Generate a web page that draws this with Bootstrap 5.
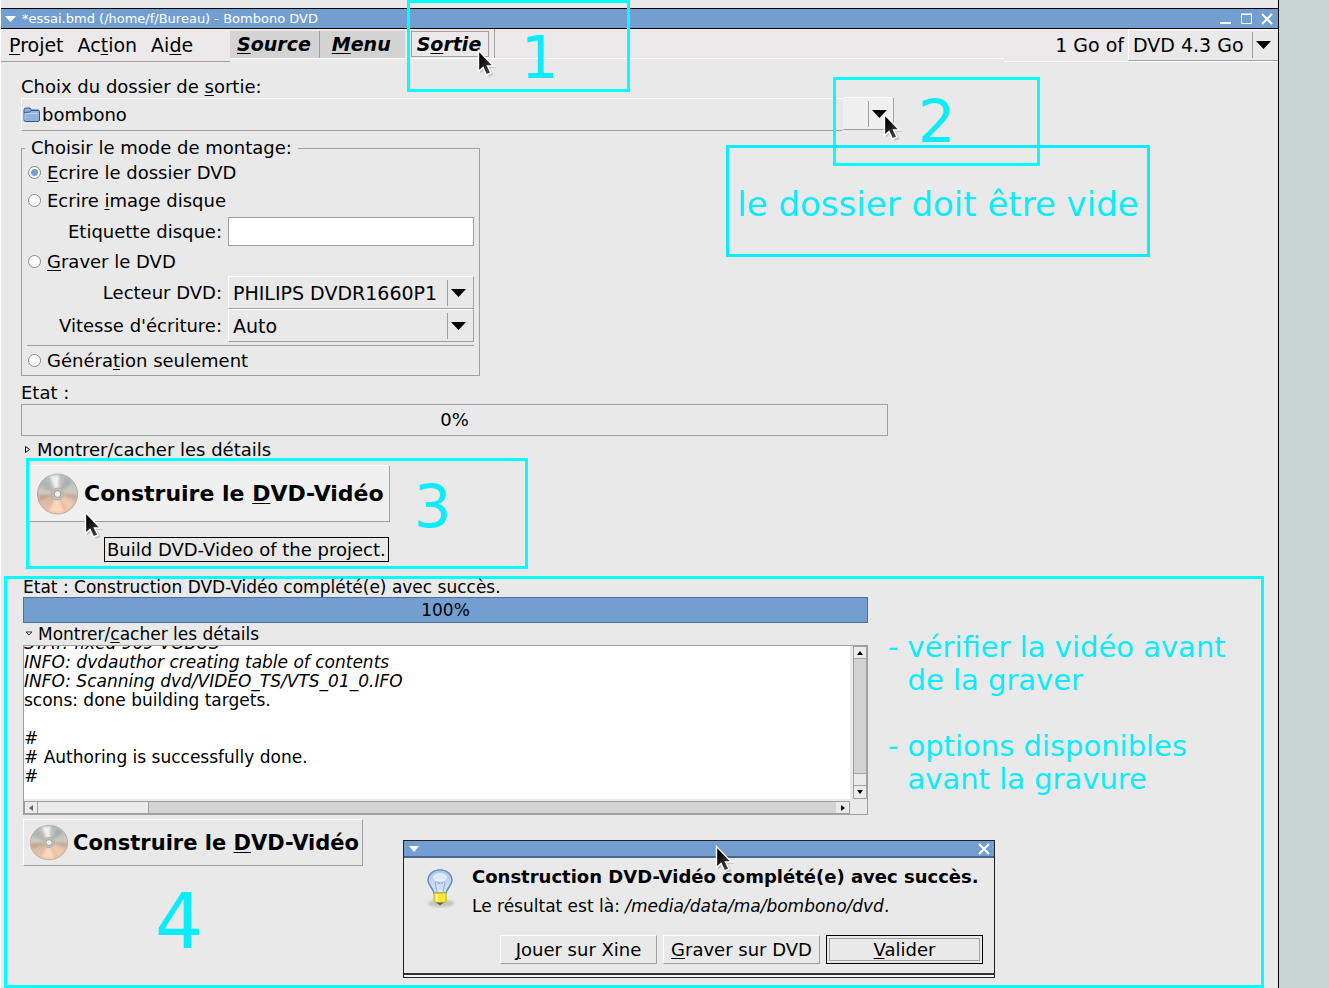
<!DOCTYPE html>
<html lang="fr">
<head>
<meta charset="utf-8">
<meta name="viewport" content="width=device-width, initial-scale=1">
<title>*essai.bmd (/home/f/Bureau) - Bombono DVD</title>
<link rel="stylesheet" href="https://cdn.jsdelivr.net/npm/bootstrap@5.3.0/dist/css/bootstrap.min.css">
<style>
:root { --face:#e9e9e9; --edge:#a0a0a0; --blue:#729fcf; --cyan:#00ffff; --ink:#0cecfa; }
body { font-family:"DejaVu Sans",sans-serif; font-size:18px; line-height:22px; color:#000; background:#c9d5d4; }
u { text-underline-offset:2px; text-decoration-thickness:1px; }
.desk { padding-right:50px; }
.win { background:var(--face); border-right:1px solid #000; border-left:1px solid #fff; }
.behind { height:8px; }
.titlebar { height:21px; background:var(--blue); color:#fff; font-size:13px; border-top:1px solid #000; border-bottom:1px solid #000; padding:0 4px; gap:5px; }
.titlebar button, .plain { border:0; background:none; padding:0; line-height:0; }
.menubar { height:33px; font-size:19px; background:#ebe9ea; }
.menus { width:229px; padding-left:8px; gap:14px; border-bottom:1px solid var(--edge); }
.menus a, .tabs a { color:#000; text-decoration:none; }
.tabs { height:30px; font:italic bold 19px/26px "DejaVu Sans",sans-serif; border-bottom:1px solid #fff; padding-top:2px; }
.tabs a { padding:0 8px 0 7px; line-height:27px; background:#d3d3d3; }
.tabs a + a { border-left:1px solid var(--edge); padding:0 14px 0 12px; }
.tabs a.current { background:none; border:1px solid var(--edge); line-height:24px; height:26px; padding:0 7px 0 5px; margin-left:6px; }
.tabend { border-left:1px solid var(--edge); margin:-2px 0 0 5px; }
.capacity { width:274px; border-bottom:1px solid #fff; }
.pick { appearance:none; border:1px solid; border-color:#fff var(--edge) var(--edge) #fff; border-radius:0; height:33px; padding:0 4px; color:#000; font-size:19px;
  background:var(--face) url("data:image/svg+xml,%3Csvg xmlns='http://www.w3.org/2000/svg' width='26' height='26'%3E%3Cpath d='M.5 0v26' stroke='%23a0a0a0'/%3E%3Cpath d='M4 9h15l-7.500 8z'/%3E%3C/svg%3E") no-repeat right 0 center; }
.capacity .pick { width:150px; height:32px; border-right:0; }
.work { padding:14px 0 0 20px; }
.wide { max-width:867px; }
.folder { max-width:873px; height:33px; }
.folder .name { border:1px solid; border-color:#fff transparent var(--edge) #fff; padding:0 1px; gap:2px; }
.folder .drop { width:51px; margin:-1px 0 1px; background:#f0f0f0; border:1px solid; border-color:#fff var(--edge) var(--edge) #f0f0f0; }
.modes { width:459px; height:238px; margin-top:7px; border:1px solid var(--edge); padding:0 5px; }
.modes legend { float:none; width:auto; font-size:18px; line-height:20px; margin:0 0 3px -2px; padding:0 6px; }
.modes hr { margin:3px 0; border-color:var(--edge); opacity:1; }
.opt { height:24px; gap:6px; padding-left:1px; }
.opt input { appearance:none; width:13px; height:13px; margin:0 0 1px; border:1px solid #888; border-radius:50%; background:#fff; }
.opt input:checked { background:radial-gradient(circle,var(--blue) 0 3px,#fff 4px); }
.opt.burn { margin:4px 0 2px; }
.pair label { width:195px; text-align:right; }
.pair { gap:6px; }
.pair .pick, .pair input { width:246px; }
.pair input { height:29px; border:1px solid var(--edge); border-radius:0; background:#fff; padding:0 4px; }
.state { padding-top:6px; }
.meter { height:32px; border:1px solid var(--edge); border-radius:0; background:none; font-size:18px; color:#000; }
.fold { line-height:20px; }
.call { border:3px solid var(--cyan); }
.num { color:var(--ink); font-size:59px; line-height:59px; }
.step3 { width:502px; height:111px; margin-left:5px; margin-top:-2px; }
.build { border:1px solid; border-color:#fff var(--edge) var(--edge) #fff; font-weight:bold; font-size:22px; line-height:26px; color:#000; padding:0 3px 0 6px; gap:5px; background:#f0f0f0; }
.step3 .build { width:361px; height:57px; margin-top:4px; }
.tip { border:1px solid #000; left:75px; top:76px; padding:0 2px; line-height:23px; white-space:nowrap; }
.step4 { margin:7px 14px 0 3px; padding-left:16px; height:412px; font-size:17px; line-height:17px; }
.step4 .left { width:845px; }
.step4 .fold { line-height:22px; }
.done { height:26px; border:1px solid #50719a; border-radius:0; background:var(--blue); margin-top:1px; }
.done .progress-bar { background:var(--blue); color:#000; font-size:17px; }
.log { display:grid; grid-template-columns:minmax(0,1fr) 14px; grid-template-rows:153px 13px; gap:2px 3px; border:1px solid var(--edge); background:var(--face); }
.log pre { font:17px/19px "DejaVu Sans",sans-serif; background:#fff; margin:0; overflow:hidden; }
.log pre code { font:inherit; color:inherit; display:block; margin-top:-12px; }
.sb { background:#d3d3d3; border:1px solid var(--edge); }
.sb i { background:#ebebeb; display:flex; align-items:center; justify-content:center; }
.sbv i { height:12px; border-bottom:1px solid var(--edge); }
.sbv i.thumb { height:13px; border-top:1px solid var(--edge); }
.sbh i { width:13px; border-right:1px solid var(--edge); }
.sbh i.thumb { width:111px; }
.step4 .build { width:340px; height:47px; margin-top:4px; font-size:21px; background:var(--face); gap:4px; padding-left:5px; }
.notes { color:var(--ink); font-size:29px; line-height:33px; list-style:none; padding:0; margin:52px 0 0 20px; }
.notes li { display:flex; gap:9px; margin-bottom:33px; }
.four { font-size:76px; line-height:76px; margin:18px 0 0 132px; }
.dlg { left:396px; top:261px; width:592px; height:138px; border:1px solid #222; background:var(--face); }
.dlg .titlebar { height:17px; border-top:0; border-bottom:2px solid #48658a; }
.dlg .base { height:4px; border-top:2px solid #333; background:#f4f4f4; }
.dlg h2 { font-size:18px; font-weight:bold; line-height:22px; margin:0 0 10px; }
.acts { gap:6px; padding:0 11px 9px 0; }
.dlg .gbtn { width:157px; height:29px; font-size:18px; background:var(--face); border:1px solid; border-color:#fff var(--edge) var(--edge) #fff; padding:0; }
.dlg .gbtn.def { border:1px solid #000; outline:1px solid var(--edge); outline-offset:-4px; }
.bulb { margin:2px 15px 0 19px; }
.over { pointer-events:none; }
.c1 { left:407px; top:0; width:223px; height:92px; padding:25px 0 0 111px; }
.c2 { left:833px; top:77px; width:207px; height:89px; padding:12px 0 0 82px; }
.c3 { left:726px; top:145px; width:424px; height:112px; padding-top:5px; border-color:var(--ink); color:var(--ink); font-size:34px; white-space:nowrap; }
.cur { width:20px; height:30px; }
</style>
</head>
<body>
<svg width="0" height="0" class="position-absolute" aria-hidden="true">
  <defs>
    <linearGradient id="gd" x1="0" y1="0" x2="0" y2="1"><stop offset="0" stop-color="#b4babf"/><stop offset=".45" stop-color="#cdcac3"/><stop offset=".62" stop-color="#d5b9a5"/><stop offset="1" stop-color="#f6c4a0"/></linearGradient>
    <linearGradient id="gb" x1="0" y1="0" x2="0" y2="1"><stop offset="0" stop-color="#a9c6ea"/><stop offset="1" stop-color="#dce8f6"/></linearGradient>
    <linearGradient id="gk" x1="0" y1="0" x2="1" y2="1"><stop offset=".2" stop-color="#000"/><stop offset="1" stop-color="#555"/></linearGradient>
    <filter id="soft"><feGaussianBlur stdDeviation="1.200"/></filter>
  </defs>
  <symbol id="disc" viewBox="0 0 44 44">
    <circle cx="22" cy="22" r="20.500" fill="url(#gd)" stroke="#b3aaa2"/>
    <g filter="url(#soft)">
    <path d="M22 22L14 4Q18 2.500 24 3z" fill="#f4f6f7" opacity=".9"/><path d="M22 22L31 5Q35 8 37 11z" fill="#8e979f" opacity=".45"/>
    <path d="M22 22L4 15Q6 9 10 7z" fill="#8e979f" opacity=".35"/><path d="M22 22L3 23V29z" fill="#b08468" opacity=".4"/><path d="M22 22L41 22V27z" fill="#b08468" opacity=".35"/>
    <path d="M22 22L14 39Q21 42 28 40z" fill="#ffe2c9" opacity=".7"/><path d="M22 22L39 30Q36 36 32 38z" fill="#fbd3b4" opacity=".6"/>
    </g>
    <circle cx="22" cy="22" r="6" fill="#c9c4bd" stroke="#aea9a2"/><circle cx="22" cy="22" r="3.500" fill="#f0efee" stroke="#96918b"/>
  </symbol>
  <symbol id="cursor" viewBox="0 0 20 30">
    <path d="M3 3v21.500l5-4 3.500 7.500 5-2-3.500-7h6z" fill="#888" opacity=".35"/>
    <path d="M1.500 1.500v21l4.500-4 3.500 7.500 4.500-2-3.500-7h6z" fill="url(#gk)" stroke="#fff" stroke-width="1.400"/>
  </symbol>
</svg>
<div class="desk position-relative min-vh-100">
  <div class="win min-vh-100">
    <div class="behind"></div>
    <header class="titlebar d-flex align-items-center">
      <svg width="12" height="6"><path d="M0 0h11l-5.500 6z" fill="#fff"/></svg>
      <span>*essai.bmd (/home/f/Bureau) - Bombono DVD</span>
      <span class="ms-auto d-flex gap-2">
        <button aria-label="Réduire"><svg width="13" height="13"><path d="M1 11h11" stroke="#fff" stroke-width="2"/></svg></button>
        <button aria-label="Agrandir"><svg width="13" height="13"><path d="M1.500 2.500h10v9h-10zM1 2h11" fill="none" stroke="#fff"/></svg></button>
        <button aria-label="Fermer"><svg width="13" height="13"><path d="M1 2l10 10M11 2L1 12" stroke="#fff" stroke-width="2"/></svg></button>
      </span>
    </header>
    <div class="menubar d-flex">
      <nav class="menus d-flex align-items-center"><a href="#"><u>P</u>rojet</a><a href="#">Ac<u>t</u>ion</a><a href="#">Ai<u>d</u>e</a></nav>
      <nav class="tabs d-flex flex-grow-1"><a href="#"><u>S</u>ource</a><a href="#"><u>M</u>enu</a><a href="#" class="current">S<u>o</u>rtie</a><span class="tabend"></span></nav>
      <div class="capacity d-flex align-items-center justify-content-end"><label for="cap" class="pe-1">1 Go of</label>
        <select id="cap" class="pick"><option>DVD 4.3 Go</option></select></div>
    </div>
    <main class="work">
      <label for="dir">Choix du dossier de <u>s</u>ortie:</label>
      <div class="folder d-flex">
        <button id="dir" class="plain name flex-grow-1 d-flex align-items-center text-black lh-base">
          <svg width="17" height="15"><path d="M1 13V3q0-2 2-2h4l1 2h7q1.500 0 1.500 1.500V13q0 1.500-1.500 1.500H2.500Q1 14.500 1 13z" fill="#8fb3de" stroke="#2f5b95"/><path d="M1.500 5.500l5-.5 2-1.500H16" fill="none" stroke="#2f5b95"/><path d="M2 13V6.500h13" fill="none" stroke="#bdd3ee"/></svg>bombono</button>
        <button class="plain drop d-flex align-items-center" aria-label="Parcourir"><svg width="50" height="26"><path d="M24.500 0v26" stroke="#a0a0a0"/><path d="M28 9h15l-7.500 8z"/></svg></button>
      </div>
      <fieldset class="modes">
        <legend>Choisir le mode de montage:</legend>
        <div class="opt d-flex align-items-center mb-1"><input type="radio" name="m" id="m1" checked><label for="m1"><u>E</u>crire le dossier DVD</label></div>
        <div class="opt d-flex align-items-center mb-1"><input type="radio" name="m" id="m2"><label for="m2">Ecrire <u>i</u>mage disque</label></div>
        <div class="pair d-flex align-items-center"><label for="tag">Etiquette disque:</label><input id="tag" type="text"></div>
        <div class="opt burn d-flex align-items-center"><input type="radio" name="m" id="m3"><label for="m3"><u>G</u>raver le DVD</label></div>
        <div class="pair d-flex align-items-center"><label for="drv">Lecteur DVD:</label><select id="drv" class="pick"><option>PHILIPS DVDR1660P1</option></select></div>
        <div class="pair d-flex align-items-center"><label for="spd">Vitesse d'écriture:</label><select id="spd" class="pick"><option>Auto</option></select></div>
        <hr>
        <div class="opt d-flex align-items-center"><input type="radio" name="m" id="m4"><label for="m4">Généra<u>t</u>ion seulement</label></div>
      </fieldset>
      <div class="state">Etat :</div>
      <div class="wide"><div class="meter progress justify-content-center align-items-center" role="progressbar" aria-label="Etat" aria-valuenow="0">0%</div></div>
      <button class="plain fold d-flex align-items-center text-black mt-1"><svg width="12" height="10" class="me-1"><path d="M4.500 1.500v6l4-3z" fill="#fff" stroke="#000"/></svg><span>Montrer/<u>c</u>acher les détails</span></button>
      <section class="call step3 position-relative d-flex">
        <button class="build d-flex align-items-center text-nowrap"><svg width="43" height="44"><use href="#disc"/></svg><span>Construire le <u>D</u>VD-Vidéo</span></button>
        <span class="num ps-4 pt-3">3</span>
        <span class="tip position-absolute">Build DVD-Video of the project.</span>
        <svg class="cur position-absolute" style="left:55px;top:50px"><use href="#cursor"/></svg>
      </section>
    </main>
    <section class="call step4 position-relative">
      <div class="d-flex">
        <div class="left flex-shrink-0">
          <div>Etat : Construction DVD-Vidéo complété(e) avec succès.</div>
          <div class="done progress" role="progressbar" aria-label="Etat" aria-valuenow="100"><div class="progress-bar" style="width:100%">100%</div></div>
          <button class="plain fold d-flex align-items-center text-black"><svg width="11" height="8" class="me-1"><path d="M3 2h6l-3 3z" fill="#fff" stroke="#333"/></svg><span>Montrer/<u>c</u>acher les détails</span></button>
          <div class="log">
            <pre><code><em>STAT: fixed 969 VOBUS
INFO: dvdauthor creating table of contents
INFO: Scanning dvd/VIDEO_TS/VTS_01_0.IFO</em>
scons: done building targets.

#
# Authoring is successfully done.
#
</code></pre>
            <div class="sb sbv d-flex flex-column"><i><svg width="6" height="4"><path d="M0 4h6L3 0z"/></svg></i><i class="thumb mt-auto"></i><i class="border-bottom-0"><svg width="6" height="4"><path d="M0 0h6L3 4z"/></svg></i></div>
            <div class="sb sbh d-flex"><i><svg width="4" height="6"><path d="M4 0v6L0 3z" fill="#666"/></svg></i><i class="thumb"></i><i class="ms-auto border-end-0"><svg width="4" height="6"><path d="M0 0v6l4-3z"/></svg></i></div>
          </div>
          <button class="build d-flex align-items-center text-nowrap"><svg width="41" height="37" viewBox="0 0 44 44" preserveAspectRatio="none"><use href="#disc" width="44" height="44"/></svg><span>Construire le <u>D</u>VD-Vidéo</span></button>
          <div class="num four">4</div>
        </div>
        <ul class="notes text-nowrap">
          <li><span>-</span><span>vérifier la vidéo avant<br>de la graver</span></li>
          <li><span>-</span><span>options disponibles<br>avant la gravure</span></li>
        </ul>
      </div>
      <div class="dlg position-absolute d-flex flex-column" role="dialog" aria-labelledby="dt">
        <div class="titlebar d-flex align-items-center justify-content-between"><svg width="12" height="6"><path d="M1 0h10l-5 6z" fill="#fff"/></svg><button aria-label="Fermer"><svg width="12" height="12"><path d="M1 1l10 10M11 1L1 11" stroke="#fff" stroke-width="2"/></svg></button></div>
        <div class="d-flex flex-grow-1 pt-2">
          <svg width="34" height="40" viewBox="0 0 34 43" preserveAspectRatio="none" class="bulb flex-shrink-0"><ellipse cx="18" cy="38" rx="13" ry="4" fill="#aaa" opacity=".6" filter="url(#soft)"/><path d="M17 2C9 2 5 8 5 13c0 6 5 8 6 14h12c1-6 6-8 6-14C29 8 25 2 17 2z" fill="url(#gb)" stroke="#5f8cc4" stroke-width="1.500"/><path d="M14 26l-2-10q3-3 4 1 1-4 3 0 1-4 3-1l-2 10" fill="none" stroke="#8ba8d0"/><ellipse cx="17" cy="10" rx="7" ry="5" fill="#fff" opacity=".55"/><path d="M11 27h12v8q0 2-2 2h-1l-3 2-3-2h-1q-2 0-2-2z" fill="#fce92f" stroke="#c9b000"/><path d="M14 28v8" stroke="#fffbc0" stroke-width="2"/><path d="M13 37h8l-4 3z" fill="#555"/></svg>
          <div class="text-nowrap"><h2 id="dt">Construction DVD-Vidéo complété(e) avec succès.</h2><div>Le résultat est là: <em>/media/data/ma/bombono/dvd</em>.</div></div>
        </div>
        <div class="acts d-flex justify-content-end"><button class="gbtn"><u>J</u>ouer sur Xine</button><button class="gbtn"><u>G</u>raver sur DVD</button><button class="gbtn def"><u>V</u>alider</button></div>
        <div class="base"></div>
        <svg class="cur position-absolute" style="left:311px;top:4px"><use href="#cursor"/></svg>
      </div>
    </section>
  </div>
  <div class="call over c1 position-absolute num">1</div>
  <div class="call over c2 position-absolute num">2</div>
  <div class="call over c3 position-absolute d-flex align-items-center justify-content-center">le dossier doit être vide</div>
  <svg class="cur over position-absolute" style="left:477px;top:49px"><use href="#cursor"/></svg>
  <svg class="cur over position-absolute" style="left:883px;top:113px"><use href="#cursor"/></svg>
</div>
<script src="https://cdn.jsdelivr.net/npm/bootstrap@5.3.0/dist/js/bootstrap.bundle.min.js"></script>
</body>
</html>
